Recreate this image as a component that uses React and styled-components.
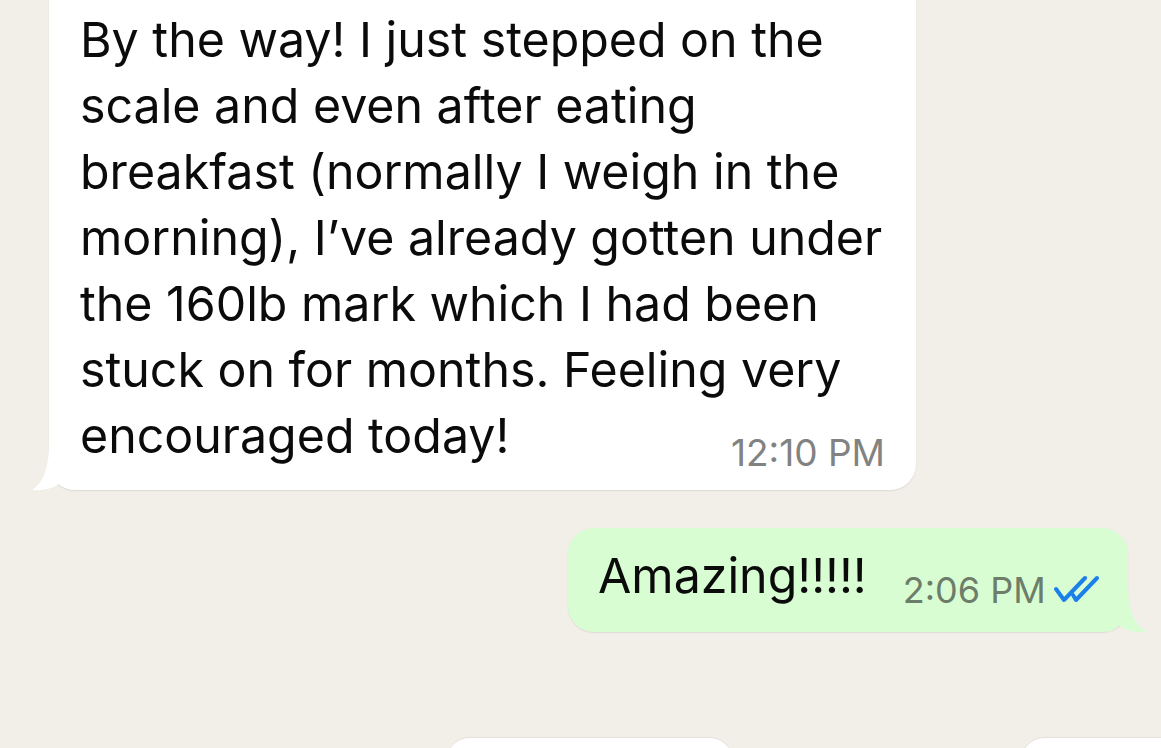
import styled, { createGlobalStyle } from "styled-components";

const GlobalStyle = createGlobalStyle`
    html, body {
        margin: 0;
        padding: 0;
        background: #f2efe9;
        overflow: hidden;
    }
    body {
        font-family: Inter, "Liberation Sans", sans-serif;
        -webkit-font-smoothing: antialiased;
    }
`;

const Chat = styled.div`
    width: 1161px;
    height: 748px;
    display: flex;
    flex-direction: column;
    background: #f2efe9;
    overflow: hidden;
`;

const Row = styled.div`
    display: flex;
    justify-content: ${(p) => (p.$out ? "flex-end" : "flex-start")};
    padding: ${(p) => (p.$out ? "0 33px 0 0" : "0 0 0 49px")};
    margin-top: ${(p) => p.$top || 0}px;
`;

const Bubble = styled.div`
    position: relative;
    background: ${(p) => (p.$out ? "#d9fdd3" : "#ffffff")};
    border-radius: 26px;
    box-shadow: 0 1px 1.5px rgba(0, 0, 0, 0.09);
`;

const InBubble = styled(Bubble)`
    width: 867px;
    box-sizing: border-box;
    padding: 20px 31px 21px 31px;
    display: grid;
    border-top-left-radius: 0;
    border-top-right-radius: 0;
`;

const OutBubble = styled(Bubble)`
    display: flex;
    align-items: flex-end;
    gap: 36px;
    width: 560px;
    height: 104px;
    box-sizing: border-box;
    padding: 15px 26px 0 30px;
`;

const Body = styled.div`
    grid-area: 1 / 1;
    font-size: 48.3px;
    line-height: 66px;
    color: #0b0b0b;
    white-space: nowrap;
`;

const OutText = styled(Body)`
    align-self: flex-start;
`;

const Meta = styled.div`
    grid-area: 1 / 1;
    justify-self: end;
    align-self: end;
    display: flex;
    align-items: center;
    gap: 8px;
    font-size: 37px;
    line-height: 40px;
    color: ${(p) => (p.$out ? "#6d7d6a" : "#828282")};
    white-space: nowrap;
    margin-bottom: ${(p) => p.$drop || 0}px;
`;

const OutMeta = styled(Meta)`
    margin-bottom: 22px;
    font-size: 36px;
`;

const Tail = styled.svg`
    position: absolute;
    bottom: -1px;
    ${(p) => (p.$out ? "right: -20px;" : "left: -18px;")}
`;

const Pills = styled.div`
    display: flex;
    margin-top: 106px;
    padding-left: 447px;
    gap: 290px;
`;

const Pill = styled.div`
    width: ${(p) => p.$w}px;
    height: 60px;
    flex-shrink: 0;
    background: #ffffff;
    border-radius: 22px;
    box-shadow: 0 -1px 1px rgba(0, 0, 0, 0.06);
`;

function Ticks() {
    return (
        <svg width="46" height="30" viewBox="0 0 46 30">
            <g fill="none" stroke="#1b80ea" strokeWidth="4" strokeLinecap="round" strokeLinejoin="round">
                <path d="M2 14 L10 25 L31 3" />
                <path d="M19 20 L22 25 L43 3" />
            </g>
        </svg>
    );
}

function App() {
    return (
        <Chat>
            <GlobalStyle />
            <Row style={{ marginTop: -13 }}>
                <InBubble>
                    <Body>
                        By the way! I just stepped on the<br />
                        scale and even after eating<br />
                        breakfast (normally I weigh in the<br />
                        morning), I’ve already gotten under<br />
                        the 160lb mark which I had been<br />
                        stuck on for months. Feeling very<br />
                        encouraged today!
                    </Body>
                    <Meta $drop={-4}>12:10 PM</Meta>
                    <Tail width="40" height="48" viewBox="0 0 40 48">
                        <path d="M18 0 C18 22 14 38 1 47 C10 48 22 46 29 40 C33 44 38 47 44 48 L44 0 Z" fill="#ffffff" />
                    </Tail>
                </InBubble>
            </Row>
            <Row $out $top={38}>
                <OutBubble $out>
                    <OutText>Amazing!!!!!</OutText>
                    <OutMeta $out>
                        2:06 PM
                        <Ticks />
                    </OutMeta>
                    <Tail $out width="40" height="48" viewBox="0 0 40 48">
                        <path d="M20 0 C20 22 24 38 39 47 C30 48 18 46 11 40 C7 44 2 47 -4 48 L-4 0 Z" fill="#d9fdd3" />
                    </Tail>
                </OutBubble>
            </Row>
            <Pills>
                <Pill $w={285} />
                <Pill $w={160} />
            </Pills>
        </Chat>
    );
}

export default App;
